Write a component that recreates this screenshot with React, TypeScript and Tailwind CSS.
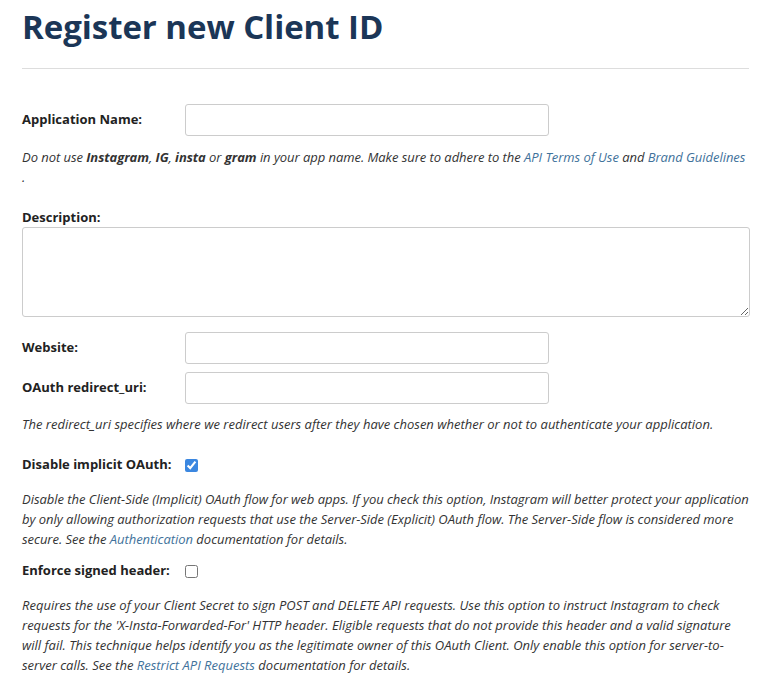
import React from "react";

const font = { fontFamily: "'Open Sans', Lato, Arial, sans-serif" };

function Link({ children }: { children: React.ReactNode }) {
  return <a className="text-[#3f729b]">{children}</a>;
}

export default function App() {
  return (
    <div className="bg-white w-[775px] h-[685px] overflow-hidden px-[22px] text-[#222]" style={font}>
      <h1 className="text-[33px] font-bold text-[#1b3657] leading-none pt-[10px] tracking-[-0.05px]">
        Register new Client ID
      </h1>
      <div className="mt-[25px] h-px bg-[#dddddd] w-[727px]" />

      <div className="flex items-center mt-[35px] h-[32px]">
        <label className="w-[163px] text-[13px] font-bold">Application Name:</label>
        <input className="w-[364px] h-[32px] border border-[#cccccc] rounded-[3px]" />
      </div>
      <p className="italic text-[13px] leading-[20px] text-[#333] mt-[11px] whitespace-nowrap tracking-[-0.05px]">
        Do not use <b>Instagram</b>, <b>IG</b>, <b>insta</b> or <b>gram</b> in your app name. Make sure to
        adhere to the <Link>API Terms of Use</Link> and <Link>Brand Guidelines</Link>
        <br />.
      </p>

      <label className="block text-[13px] font-bold mt-[20px] leading-[20px]">Description:</label>
      <textarea className="block w-[728px] h-[90px] border border-[#cccccc] rounded-[3px]" />

      <div className="flex items-center mt-[15px] h-[32px]">
        <label className="w-[163px] text-[13px] font-bold">Website:</label>
        <input className="w-[364px] h-[32px] border border-[#cccccc] rounded-[3px]" />
      </div>
      <div className="flex items-center mt-[8px] h-[32px]">
        <label className="w-[163px] text-[13px] font-bold">OAuth redirect_uri:</label>
        <input className="w-[364px] h-[32px] border border-[#cccccc] rounded-[3px]" />
      </div>
      <p className="italic text-[13px] leading-[20px] text-[#333] mt-[10px] whitespace-nowrap">
        The redirect_uri specifies where we redirect users after they have chosen whether or not to
        authenticate your application.
      </p>

      <div className="flex items-center mt-[21px] h-[20px]">
        <label className="w-[163px] text-[13px] font-bold">Disable implicit OAuth:</label>
        <input type="checkbox" defaultChecked className="w-[13px] h-[13px] m-0 accent-[#3b87e0]" />
      </div>
      <p className="italic text-[13px] leading-[20px] text-[#333] mt-[14px] whitespace-nowrap tracking-[-0.03px]">
        Disable the Client-Side (Implicit) OAuth flow for web apps. If you check this option, Instagram will
        better protect your application
        <br />
        by only allowing authorization requests that use the Server-Side (Explicit) OAuth flow. The
        Server-Side flow is considered more
        <br />
        secure. See the <Link>Authentication</Link> documentation for details.
      </p>

      <div className="flex items-center mt-[12px] h-[20px]">
        <label className="w-[163px] text-[13px] font-bold">Enforce signed header:</label>
        <input type="checkbox" className="w-[13px] h-[13px] m-0" />
      </div>
      <p className="italic text-[13px] leading-[20px] text-[#333] mt-[14px] whitespace-nowrap">
        Requires the use of your Client Secret to sign POST and DELETE API requests. Use this option to
        instruct Instagram to check
        <br />
        requests for the 'X-Insta-Forwarded-For' HTTP header. Eligible requests that do not provide this
        header and a valid signature
        <br />
        will fail. This technique helps identify you as the legitimate owner of this OAuth Client. Only
        enable this option for server-to-
        <br />
        server calls. See the <Link>Restrict API Requests</Link> documentation for details.
      </p>
    </div>
  );
}
